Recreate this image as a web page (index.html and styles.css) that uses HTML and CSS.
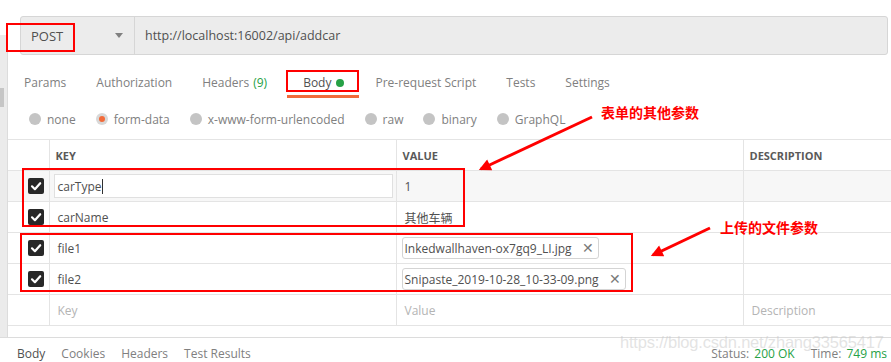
FILE: index.html
```html
<!DOCTYPE html>
<html lang="en">
<head>
    <meta charset="UTF-8">
    <meta name="viewport" content="width=device-width, initial-scale=1.0">
    <title>addcar - form-data</title>
    <link rel="stylesheet" href="styles.css">
</head>
<body>

    <div class="page">
        <div class="workspace">
            <div class="scroll-strip"><div class="thumb"></div></div>

            <div class="main">
                <div class="request-bar">
                    <div class="method">POST <span class="caret"></span></div>
                    <div class="url">http://localhost:16002/api/addcar</div>
                </div>

                <div class="tabs">
                    <span class="tab">Params</span>
                    <span class="tab">Authorization</span>
                    <span class="tab headers">Headers <span class="count">(9)</span></span>
                    <span class="tab active">Body <span class="dot"></span></span>
                    <span class="tab">Pre-request Script</span>
                    <span class="tab">Tests</span>
                    <span class="tab">Settings</span>
                </div>

                <div class="body-types">
                    <span class="radio-item"><span class="radio"></span>none</span>
                    <span class="radio-item"><span class="radio checked"></span>form-data</span>
                    <span class="radio-item"><span class="radio"></span>x-www-form-urlencoded</span>
                    <span class="radio-item"><span class="radio"></span>raw</span>
                    <span class="radio-item"><span class="radio"></span>binary</span>
                    <span class="radio-item"><span class="radio"></span>GraphQL</span>
                </div>

                <table class="params">
                    <colgroup>
                        <col class="col-check">
                        <col class="col-key">
                        <col class="col-value">
                        <col class="col-desc">
                    </colgroup>
                    <thead>
                        <tr>
                            <th></th>
                            <th>KEY</th>
                            <th>VALUE</th>
                            <th>DESCRIPTION</th>
                        </tr>
                    </thead>
                    <tbody>
                        <tr class="hovered">
                            <td class="check-cell"><span class="checkbox"><svg viewBox="0 0 16 16" width="16" height="16"><path d="M4 8.3 L6.9 11.2 L12.2 5.2" fill="none" stroke="#fff" stroke-width="2.2" stroke-linecap="round" stroke-linejoin="round"/></svg></span></td>
                            <td class="key-cell"><div class="key-input">carType<span class="cursor"></span></div></td>
                            <td>1</td>
                            <td></td>
                        </tr>
                        <tr>
                            <td class="check-cell"><span class="checkbox"><svg viewBox="0 0 16 16" width="16" height="16"><path d="M4 8.3 L6.9 11.2 L12.2 5.2" fill="none" stroke="#fff" stroke-width="2.2" stroke-linecap="round" stroke-linejoin="round"/></svg></span></td>
                            <td>carName</td>
                            <td class="cjk">其他车辆</td>
                            <td></td>
                        </tr>
                        <tr>
                            <td class="check-cell"><span class="checkbox"><svg viewBox="0 0 16 16" width="16" height="16"><path d="M4 8.3 L6.9 11.2 L12.2 5.2" fill="none" stroke="#fff" stroke-width="2.2" stroke-linecap="round" stroke-linejoin="round"/></svg></span></td>
                            <td>file1</td>
                            <td class="file-cell"><span class="file-chip">Inkedwallhaven-ox7gq9_LI.jpg <span class="remove">&#x2715;</span></span></td>
                            <td></td>
                        </tr>
                        <tr>
                            <td class="check-cell"><span class="checkbox"><svg viewBox="0 0 16 16" width="16" height="16"><path d="M4 8.3 L6.9 11.2 L12.2 5.2" fill="none" stroke="#fff" stroke-width="2.2" stroke-linecap="round" stroke-linejoin="round"/></svg></span></td>
                            <td>file2</td>
                            <td class="file-cell"><span class="file-chip">Snipaste_2019-10-28_10-33-09.png <span class="remove">&#x2715;</span></span></td>
                            <td></td>
                        </tr>
                        <tr class="placeholder">
                            <td></td>
                            <td>Key</td>
                            <td>Value</td>
                            <td>Description</td>
                        </tr>
                    </tbody>
                </table>
            </div>
        </div>

        <div class="response-bar">
            <div class="response-tabs">
                <span class="current">Body</span>
                <span>Cookies</span>
                <span>Headers</span>
                <span>Test Results</span>
            </div>
            <div class="response-meta">
                <span>Status: <span class="ok">200 OK</span></span>
                <span>Time: <span class="ok">749 ms</span></span>
            </div>
        </div>

        <!-- annotation layer drawn on top of the screenshot -->
        <svg class="marks" width="891" height="362" viewBox="0 0 891 362">
            <defs>
                <marker id="head" viewBox="0 0 10 10" refX="8" refY="5" markerWidth="5" markerHeight="4" orient="auto">
                    <path d="M0 0 L10 5 L0 10 z" fill="#ff0000"/>
                </marker>
            </defs>
            <g fill="none" stroke="#ff0000" stroke-width="2">
                <rect x="7" y="24" width="67" height="27"/>
                <rect x="287" y="71" width="71" height="20"/>
                <rect x="23" y="169" width="441" height="57"/>
                <rect x="21" y="234" width="611" height="57"/>
            </g>
            <g stroke="#ff0000" stroke-width="3">
                <line x1="592" y1="117" x2="481" y2="169" marker-end="url(#head)"/>
                <line x1="710" y1="228" x2="653" y2="255" marker-end="url(#head)"/>
            </g>
        </svg>
        <div class="note note-form">表单的其他参数</div>
        <div class="note note-file">上传的文件参数</div>
        <div class="watermark">https://blog.csdn.net/zhang33565417</div>
    </div>

</body>
</html>
```

FILE: styles.css
```css
body {
    margin: 0;
    font-family: 'Open Sans', 'Noto Sans', sans-serif;
    font-size: 12px;
    color: #505050;
    background-color: #ffffff;
}
.page {
    position: relative;
    width: 891px;
    height: 362px;
    overflow: hidden;
    display: flex;
    flex-direction: column;
}
.workspace {
    flex: none;
    display: flex;
    height: 337px;
}
.scroll-strip {
    width: 7px;
    margin-top: 35px;
    background-color: #ebebeb;
    border-right: 1px solid #dcdcdc;
}
.thumb {
    width: 4px;
    height: 19px;
    margin-top: 53px;
    background-color: #c6c6c6;
}
.main {
    flex: 1;
    min-width: 0;
}

/* request line */
.request-bar {
    display: flex;
    height: 37px;
    margin: 16px 3px 0 12px;
    background-color: #ececec;
    border: 1px solid #d6d6d6;
    border-radius: 3px;
}
.method {
    width: 103px;
    padding-left: 10px;
    display: flex;
    align-items: center;
    justify-content: space-between;
    border-right: 1px solid #d6d6d6;
    font-size: 13px;
    color: #505050;
}
.caret {
    width: 0;
    height: 0;
    margin-right: 11px;
    border-left: 4px solid transparent;
    border-right: 4px solid transparent;
    border-top: 5px solid #808080;
}
.url {
    display: flex;
    align-items: center;
    padding-left: 10px;
    font-size: 12.5px;
    color: #505050;
}

/* request tabs */
.tabs {
    display: flex;
    margin-top: 15px;
    height: 28px;
}
.tab {
    display: flex;
    align-items: center;
    padding: 0 14px 0 16px;
    color: #808080;
    border-bottom: 3px solid transparent;
}
.tab.headers {
    padding-right: 20px;
}
.tab .count {
    color: #26a146;
    margin-left: 4px;
}
.tab.active {
    padding: 0 15px 0 16px;
    color: #505050;
    border-bottom-color: #f26b3a;
}
.dot {
    width: 8px;
    height: 8px;
    margin-left: 5px;
    border-radius: 50%;
    background-color: #26a146;
}

/* body type radios */
.body-types {
    display: flex;
    align-items: center;
    gap: 20px;
    height: 41px;
    padding-left: 21px;
    padding-top: 1px;
    box-sizing: border-box;
    color: #808080;
}
.radio-item {
    display: flex;
    align-items: center;
    gap: 6px;
}
.radio {
    width: 12px;
    height: 12px;
    border-radius: 50%;
    background-color: #c4c4c4;
    display: flex;
    align-items: center;
    justify-content: center;
}
.radio.checked {
    background-color: #d8d8d8;
}
.radio.checked::after {
    content: "";
    width: 6px;
    height: 6px;
    border-radius: 50%;
    background-color: #f26b3a;
}

/* key / value table */
.params {
    width: 883px;
    table-layout: fixed;
    border-collapse: collapse;
}
.col-check { width: 41px; }
.col-key { width: 347px; }
.col-value { width: 347px; }
.col-desc { width: 148px; }
.params th, .params td {
    height: 30px;
    padding: 0 8px;
    border: 1px solid #e4e4e4;
    text-align: left;
    white-space: nowrap;
    overflow: hidden;
}
.params tr > :first-child {
    border-left: none;
}
.params th {
    padding-left: 6px;
    font-size: 11px;
    font-weight: bold;
    color: #5a5a5a;
}
.params td {
    color: #505050;
    font-size: 12px;
}
.params tr.hovered td {
    background-color: #f7f7f7;
}
.params td.check-cell {
    padding: 0 0 0 20px;
}
.checkbox {
    display: block;
    width: 16px;
    height: 16px;
    border-radius: 2px;
    background-color: #282828;
}
.checkbox svg {
    display: block;
}
.params td.key-cell {
    padding: 0 3px 0 4px;
}
.key-input {
    height: 22px;
    display: flex;
    align-items: center;
    padding-left: 3px;
    background-color: #ffffff;
    border: 1px solid #e0e0e0;
}
.cursor {
    width: 1px;
    height: 15px;
    background-color: #303030;
}
.cjk {
    font-family: 'Noto Sans CJK SC', sans-serif;
}
.params td.file-cell {
    padding-left: 5px;
}
.file-chip {
    display: inline-flex;
    align-items: center;
    height: 20px;
    padding: 0 4px 0 2px;
    border: 1px solid #d4d4d4;
    border-radius: 3px;
}
.remove {
    margin-left: 10px;
    font-size: 14px;
    line-height: 14px;
    color: #7a7a7a;
}
.params tr.placeholder td {
    color: #b4b4b4;
}

/* response section */
.response-bar {
    flex: none;
    display: flex;
    justify-content: space-between;
    align-items: center;
    height: 25px;
    box-sizing: border-box;
    padding: 6px 4px 0 17px;
    border-top: 1px solid #dcdcdc;
    color: #808080;
}
.response-tabs, .response-meta {
    display: flex;
    gap: 16px;
}
.response-tabs .current {
    color: #505050;
}
.response-meta .ok {
    color: #26a146;
    margin-left: 2px;
}

/* annotations */
.marks {
    position: absolute;
    left: 0;
    top: 0;
}
.note {
    position: absolute;
    font-family: 'Noto Sans CJK SC', sans-serif;
    font-size: 14px;
    font-weight: bold;
    color: #ff0000;
    line-height: 16px;
}
.note-form {
    left: 601px;
    top: 104px;
}
.note-file {
    left: 720px;
    top: 219px;
}
.watermark {
    position: absolute;
    left: 620px;
    top: 333px;
    font-family: 'Liberation Sans', Arial, sans-serif;
    font-size: 16.5px;
    color: rgba(200, 200, 200, 0.5);
    letter-spacing: -0.2px;
}
```
